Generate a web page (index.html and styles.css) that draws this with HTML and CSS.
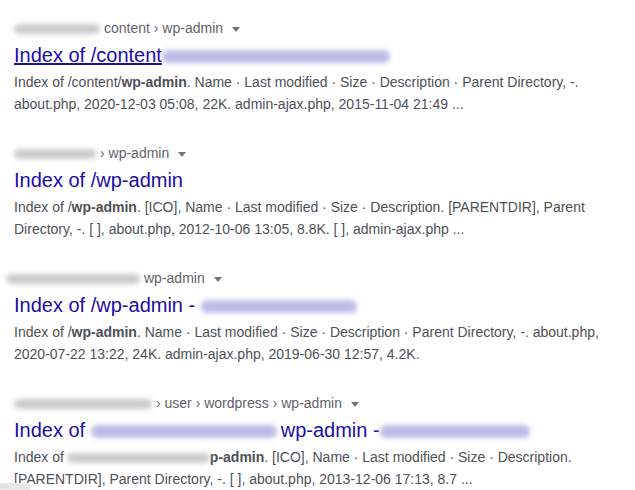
FILE: index.html
```html
<!DOCTYPE html>
<html lang="en">
  <head>
    <meta charset="utf-8" />
    <title>wp-admin - Search</title>
    <link rel="stylesheet" href="styles.css">
  </head>
  <body>
    <div class="results">
      <div class="result">
        <div class="cite"><span class="smudge grey w88"></span>content › wp-admin<span class="caret"></span></div>
        <a class="title hover" href="#">Index of /content<span class="smudge blue w230"></span></a>
        <div class="snippet">Index of /content/<b>wp-admin</b>. Name · Last modified · Size · Description · Parent Directory, -.<br>about.php, 2020-12-03 05:08, 22K. admin-ajax.php, 2015-11-04 21:49 ...</div>
      </div>
      <div class="result">
        <div class="cite"><span class="smudge grey w82"></span>› wp-admin<span class="caret"></span></div>
        <a class="title" href="#">Index of /wp-admin</a>
        <div class="snippet">Index of /<b>wp-admin</b>. [ICO], Name · Last modified · Size · Description. [PARENTDIR], Parent<br>Directory, -. [ ], about.php, 2012-10-06 13:05, 8.8K. [ ], admin-ajax.php ...</div>
      </div>
      <div class="result">
        <div class="cite"><span class="smudge grey w132 out"></span>wp-admin<span class="caret"></span></div>
        <a class="title" href="#">Index of /wp-admin - <span class="smudge blue w156"></span></a>
        <div class="snippet">Index of /<b>wp-admin</b>. Name · Last modified · Size · Description · Parent Directory, -. about.php,<br>2020-07-22 13:22, 24K. admin-ajax.php, 2019-06-30 12:57, 4.2K.</div>
      </div>
      <div class="result last">
        <div class="cite"><span class="smudge grey w140"></span>› user › wordpress › wp-admin<span class="caret"></span></div>
        <a class="title" href="#">Index of <span class="smudge blue w188"></span>wp-admin -<span class="smudge blue w150"></span></a>
        <div class="snippet">Index of<span class="smudge grey w143 tight"></span><b>p-admin</b>. [ICO], Name · Last modified · Size · Description.<br>[PARENTDIR], Parent Directory, -. [ ], about.php, 2013-12-06 17:13, 8.7 ...</div>
      </div>
    </div>
    <div class="status">·:·:·</div>
  </body>
</html>
```

FILE: styles.css
```css
body {
  margin: 0;
  background-color: #fff;
  font-family: "Liberation Sans", Arial, sans-serif;
}
.results {
  padding: 18px 0 0 14px;
}
.result {
  margin-bottom: 28px;
}
.result.last {
  margin-bottom: 0;
}
.cite {
  font-size: 14px;
  line-height: 20px;
  height: 20px;
  color: #5f6368;
  white-space: nowrap;
}
.caret {
  display: inline-block;
  margin-left: 9px;
  vertical-align: middle;
  border-left: 4px solid transparent;
  border-right: 4px solid transparent;
  border-top: 5px solid #70757a;
}
.title {
  display: block;
  margin-top: 4px;
  font-size: 20px;
  line-height: 26px;
  height: 26px;
  color: #1a0dab;
  text-decoration: none;
  white-space: nowrap;
}
.title.hover {
  text-decoration: underline;
}
.snippet {
  margin-top: 3px;
  font-size: 14px;
  line-height: 22px;
  height: 44px;
  color: #4d5156;
  white-space: nowrap;
}
.snippet b {
  color: #4d5156;
}
.smudge {
  display: inline-block;
  height: 10px;
  border-radius: 6px;
  vertical-align: middle;
  filter: blur(2.5px);
  margin-right: 4px;
}
.smudge.grey {
  background-color: #cbcbcb;
}
.smudge.blue {
  background-color: #bcbce6;
  height: 13px;
}
.smudge.out {
  margin-left: -8px;
}
.smudge.tight {
  margin: 0 0 0 3px;
}
.w82 { width: 82px; }
.w88 { width: 86px; }
.w132 { width: 134px; }
.w140 { width: 138px; }
.w143 { width: 143px; }
.w150 { width: 150px; }
.w156 { width: 156px; }
.w188 { width: 186px; }
.w230 { width: 228px; }
.status {
  position: fixed;
  left: 0;
  bottom: 0;
  width: 30px;
  height: 7px;
  background-color: #e8e8e8;
  border-top-right-radius: 2px;
  font-size: 6px;
  line-height: 7px;
  color: #999;
  overflow: hidden;
}
```
